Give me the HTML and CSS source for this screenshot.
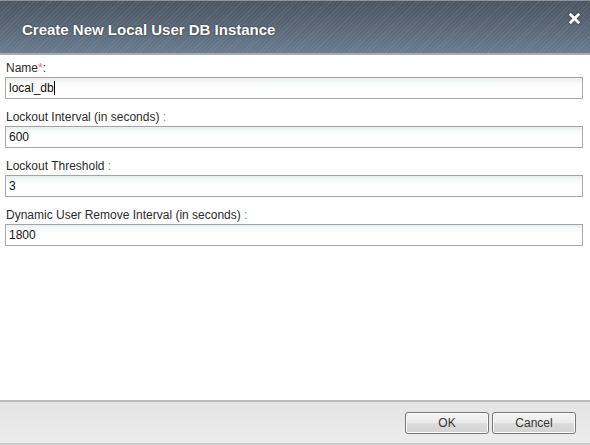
FILE: index.html
```html
<!DOCTYPE html>
<html>
<head>
<meta charset="utf-8">
<link rel="stylesheet" href="styles.css">
</head>
<body>
<div class="dialog">
  <div class="header">
    <h1 class="title">Create New Local User DB Instance</h1>
    <span class="close" aria-label="Close">
      <svg width="11" height="11" viewBox="0 0 11 11">
        <path d="M1.8 1.8 L9.2 9.2 M9.2 1.8 L1.8 9.2" stroke="#ffffff" stroke-width="2.8" stroke-linecap="square"/>
      </svg>
    </span>
  </div>
  <div class="content">
    <div class="field">
      <div class="label">Name<span class="req">*</span>:</div>
      <div class="input">local_db<span class="caret"></span></div>
    </div>
    <div class="field">
      <div class="label">Lockout Interval (in seconds) <span class="colon">:</span></div>
      <div class="input">600</div>
    </div>
    <div class="field">
      <div class="label">Lockout Threshold <span class="colon">:</span></div>
      <div class="input">3</div>
    </div>
    <div class="field">
      <div class="label">Dynamic User Remove Interval (in seconds) <span class="colon">:</span></div>
      <div class="input">1800</div>
    </div>
  </div>
  <div class="footer">
    <button class="btn">OK</button>
    <button class="btn">Cancel</button>
  </div>
</div>
</body>
</html>
```

FILE: styles.css
```css
html, body {
  margin: 0;
  padding: 0;
  background: #ffffff;
}

body {
  font-family: "Liberation Sans", Arial, sans-serif;
  font-size: 12px;
  color: #222222;
}

.dialog {
  width: 590px;
  height: 445px;
  display: flex;
  flex-direction: column;
  overflow: hidden;
}

.header {
  height: 52px;
  flex: none;
  display: flex;
  align-items: center;
  justify-content: space-between;
  border-top: 1px solid #8d939a;
  border-bottom: 2px solid #a7abb0;
  background:
    repeating-linear-gradient(-45deg, rgba(255,255,255,0.06) 0 1px, rgba(255,255,255,0) 1px 3px),
    linear-gradient(to bottom, #4b5561 0%, #5a6776 50%, #697b8f 100%);
}

.title {
  margin: 0 0 0 22px;
  font-size: 15px;
  font-weight: bold;
  color: #ffffff;
  text-shadow: 0 0 2px rgba(0,0,0,0.6);
  line-height: 18px;
  padding-top: 6px;
}

.close {
  align-self: flex-start;
  margin: 12px 10px 0 0;
  width: 11px;
  height: 11px;
  display: block;
  filter: drop-shadow(0 0 1px rgba(0,0,0,0.5));
}

.close svg {
  display: block;
}

.content {
  flex: 1;
  padding: 6px 7px 0 5px;
  display: flex;
  flex-direction: column;
  gap: 11px;
}

.label {
  line-height: 15px;
  padding-left: 1px;
  margin-bottom: 1px;
  color: #2b2b2b;
}

.req {
  color: #e86f6f;
}

.colon {
  color: #8a8a8a;
}

.input {
  height: 20px;
  line-height: 20px;
  border: 1px solid #a9a9b4;
  border-top-color: #a2a2a8;
  padding-left: 3px;
  color: #111111;
  background: linear-gradient(to bottom, #e9eeee 0px, #f7f9f9 4px, #ffffff 9px);
}

.caret {
  display: inline-block;
  width: 1px;
  height: 14px;
  background: #000000;
  vertical-align: -3px;
}

.footer {
  flex: none;
  box-sizing: border-box;
  height: 45px;
  border-top: 2px solid #b9b9b9;
  border-bottom: 2px solid #cbcbcb;
  background: linear-gradient(to bottom, #e4e4e4, #ececec);
  display: flex;
  justify-content: flex-end;
  align-items: flex-start;
  gap: 3px;
  padding: 10px 14px 0 0;
}

.btn {
  width: 84px;
  height: 22px;
  margin: 0;
  padding: 0;
  border: 1px solid #767676;
  border-radius: 3px;
  font-family: "Liberation Sans", Arial, sans-serif;
  font-size: 12px;
  color: #333333;
  background: linear-gradient(to bottom, #f3f3f3 0%, #ebebeb 50%, #dcdcdc 50%, #d2d2d2 100%);
  box-shadow: inset 0 0 0 1px #fbfbfb;
}
```
